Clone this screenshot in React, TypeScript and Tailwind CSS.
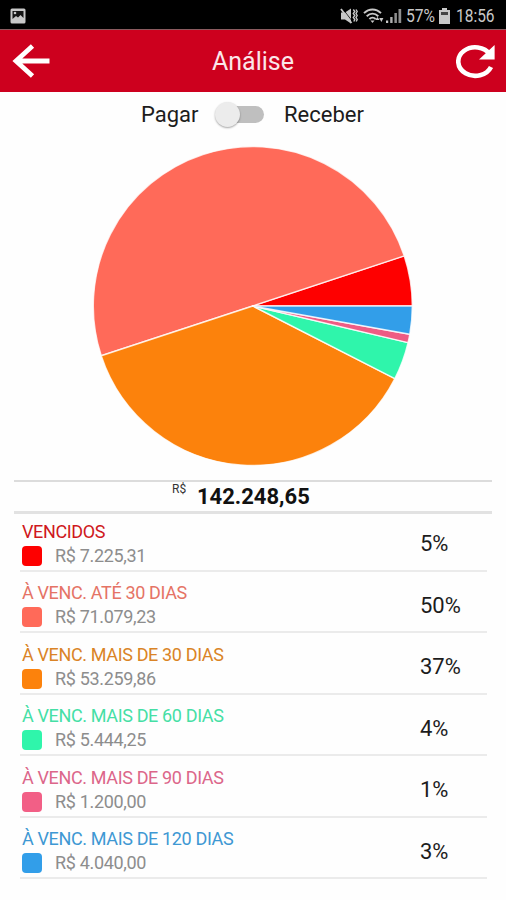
type TItem = {
  label: string;
  value: number;
  amount: string;
  percent: string;
  fill: string;
  text: string;
  square: string;
};

const items: TItem[] = [
  { label: "VENCIDOS", value: 7225.31, amount: "7.225,31", percent: "5%", fill: "#fe0000", text: "text-[#cf1820]", square: "bg-[#fe0000]" },
  { label: "À VENC. ATÉ 30 DIAS", value: 71079.23, amount: "71.079,23", percent: "50%", fill: "#ff6a59", text: "text-[#e57365]", square: "bg-[#ff6a59]" },
  { label: "À VENC. MAIS DE 30 DIAS", value: 53259.86, amount: "53.259,86", percent: "37%", fill: "#fc820c", text: "text-[#da8426]", square: "bg-[#fc820c]" },
  { label: "À VENC. MAIS DE 60 DIAS", value: 5444.25, amount: "5.444,25", percent: "4%", fill: "#2ff5ab", text: "text-[#45dfa5]", square: "bg-[#2ff5ab]" },
  { label: "À VENC. MAIS DE 90 DIAS", value: 1200, amount: "1.200,00", percent: "1%", fill: "#ee5c84", text: "text-[#dc668a]", square: "bg-[#f25f86]" },
  { label: "À VENC. MAIS DE 120 DIAS", value: 4040, amount: "4.040,00", percent: "3%", fill: "#329ee9", text: "text-[#3e98d3]", square: "bg-[#329ee9]" },
];

const RADIUS = 159.5;

function StatusBar() {
  return (
    <div className="flex h-[30px] items-center justify-between border-b border-[#8a5a5e] bg-black pl-[10px] pr-[11px] pt-[2px] text-[#c8c8c8]">
      <svg width="16" height="16" viewBox="0 0 16 16">
        <rect x="0.5" y="0.5" width="15" height="15" rx="1.5" fill="#c8c8c8" />
        <path d="M2.5 3h11v7l-3-3-2.5 2.5-2-1.5-3.5 3z" fill="#151515" />
        <circle cx="5" cy="5" r="1.3" fill="#c8c8c8" />
      </svg>
      <div className="flex items-center">
        <svg width="18" height="18" viewBox="0 0 18 18" fill="none" stroke="#c8c8c8">
          <path d="M1 5.5h4l6-4v15l-6-4H1z" fill="#c8c8c8" stroke="none" />
          <path d="M2.5 1.5l10 13" stroke="#000" strokeWidth="0.8" />
          <path d="M1 2l10.5 14" strokeWidth="1.8" />
          <path d="M13.3 2.5l1.5 2-1.5 2 1.5 2-1.5 2 1.5 2-1 2M16 2.5l1.2 2-1.2 2 1.2 2-1.2 2 1.2 2-1 2" strokeWidth="1.4" />
        </svg>
        <svg className="ml-[5px]" width="21" height="16" viewBox="0 0 21 16" fill="none" stroke="#c8c8c8" strokeWidth="1.9">
          <path d="M1 5.2C6 .2 13 .2 18 5.2M3.7 8.2c3.5-3.4 8.1-3.4 11.6 0M6.4 11c1.8-1.8 4.4-1.8 6.2 0" />
          <path d="M7.5 12.5h4l-2 2.5z" fill="#c8c8c8" stroke="none" />
          <path d="M12.2 12l2.2-3 2.2 3zM16.2 10l2.2 4 2-4z" fill="#c8c8c8" stroke="none" />
        </svg>
        <svg className="ml-[2px]" width="16" height="16" viewBox="0 0 16 16">
          <rect x="0" y="12.5" width="2.2" height="2.5" fill="#c8c8c8" />
          <rect x="4.2" y="9" width="2.4" height="6" fill="#b0b0b0" />
          <rect x="8.4" y="5" width="2.5" height="10" fill="#8f8f8f" />
          <rect x="12.5" y="1" width="2.7" height="14" fill="#8f8f8f" />
        </svg>
        <span className="ml-[4px] w-[30px] origin-left scale-x-[0.87] whitespace-nowrap text-[18px] leading-none">57%</span>
        <svg className="ml-[3px]" width="11" height="16" viewBox="0 0 11 16">
          <path d="M3 0h5v2h3v14H0V2h3z" fill="#c8c8c8" />
          <path d="M2 4h7v3H2z" fill="#444" />
        </svg>
        <span className="ml-[6px] w-[39px] origin-left scale-x-[0.86] whitespace-nowrap text-[18px] leading-none">18:56</span>
      </div>
    </div>
  );
}

function Header() {
  return (
    <header className="flex h-[62px] items-center justify-between bg-[#cd001e] pl-3 pr-[10px]">
      <svg width="38" height="34" viewBox="0 0 38 34" fill="none" stroke="#fff" strokeWidth="4.8">
        <path d="M37.5 17H4M20.5 2L4 17l16.5 15" />
      </svg>
      <h1 className="text-[25px] leading-none text-[#fbe6e9]">Análise</h1>
      <svg width="40" height="36" viewBox="0 0 40 36" fill="none">
        <path d="M35 24A17 14.3 0 1 1 34 11.4" stroke="#fff" strokeWidth="4.6" />
        <path d="M38.6 2V16.5H23z" fill="#fff" />
      </svg>
    </header>
  );
}

function Toggle() {
  return (
    <div className="flex h-[46px] items-center pl-[141px] text-[22px] leading-none text-[#1c1c1c]">
      <span className="w-[74px]">Pagar</span>
      <button className="relative h-[18px] w-[49px]">
        <span className="absolute right-0 top-0 h-[17px] w-[40px] rounded-full bg-[#bfbfbf]" />
        <span className="absolute -top-[4px] left-0 size-[25px] rounded-full bg-[#ececec] shadow-[0_1px_2px_rgba(0,0,0,0.35)]" />
      </button>
      <span className="ml-5">Receber</span>
    </div>
  );
}

function PieChart() {
  const total = items.reduce((sum, item) => sum + item.value, 0);
  let angle = 0;

  const slices = items.map((item) => {
    const start = angle;
    angle += (item.value / total) * Math.PI * 2;
    const large = angle - start > Math.PI ? 1 : 0;
    const x1 = RADIUS * Math.cos(start);
    const y1 = -RADIUS * Math.sin(start);
    const x2 = RADIUS * Math.cos(angle);
    const y2 = -RADIUS * Math.sin(angle);
    return { fill: item.fill, d: `M0 0L${x1} ${y1}A${RADIUS} ${RADIUS} 0 ${large} 0 ${x2} ${y2}Z` };
  });

  return (
    <svg className="mx-auto mt-[8px] block" width="320" height="320" viewBox="-159.8 -160 320 320">
      {slices.map((slice) => (
        <path key={slice.fill} d={slice.d} fill={slice.fill} stroke="#fff" strokeOpacity="0.8" strokeWidth="1.4" strokeLinejoin="round" />
      ))}
    </svg>
  );
}

function Row({ item }: { item: TItem }) {
  return (
    <li className="flex h-[61.5px] items-center border-b-2 border-[#ebebeb] pl-[2px] pt-[8px]">
      <div className="w-[398px]">
        <p className={`text-[18px] leading-[22px] tracking-[-0.36px] ${item.text}`}>{item.label}</p>
        <div className="mt-[2px] flex items-center">
          <span className={`size-5 rounded-[4px] ${item.square}`} />
          <span className="ml-[13px] text-[18px] leading-[22px] tracking-[-0.33px] text-[#8d8d8d]">R$ {item.amount}</span>
        </div>
      </div>
      <span className="pt-px text-[22px] leading-none text-[#1c1c1c]">{item.percent}</span>
    </li>
  );
}

export default function App() {
  return (
    <div className="h-[900px] w-[506px] overflow-hidden bg-[#fefefe] font-['Roboto',sans-serif]">
      <StatusBar />
      <Header />
      <Toggle />
      <PieChart />
      <div className="ml-[14px] mr-[14px] mt-[14px] flex h-[34px] border-b-[3px] border-t-2 border-b-[#e2e2e2] border-t-[#dcdcdc] pl-[158px]">
        <span className="mt-[1px] w-[25px] text-[12px] leading-[13px] text-[#333]">R$</span>
        <span className="text-[22px] font-bold leading-[30px] text-[#111]">142.248,65</span>
      </div>
      <ul className="-mt-[4px] ml-5 mr-[19px]">
        {items.map((item) => (
          <Row key={item.label} item={item} />
        ))}
      </ul>
    </div>
  );
}
